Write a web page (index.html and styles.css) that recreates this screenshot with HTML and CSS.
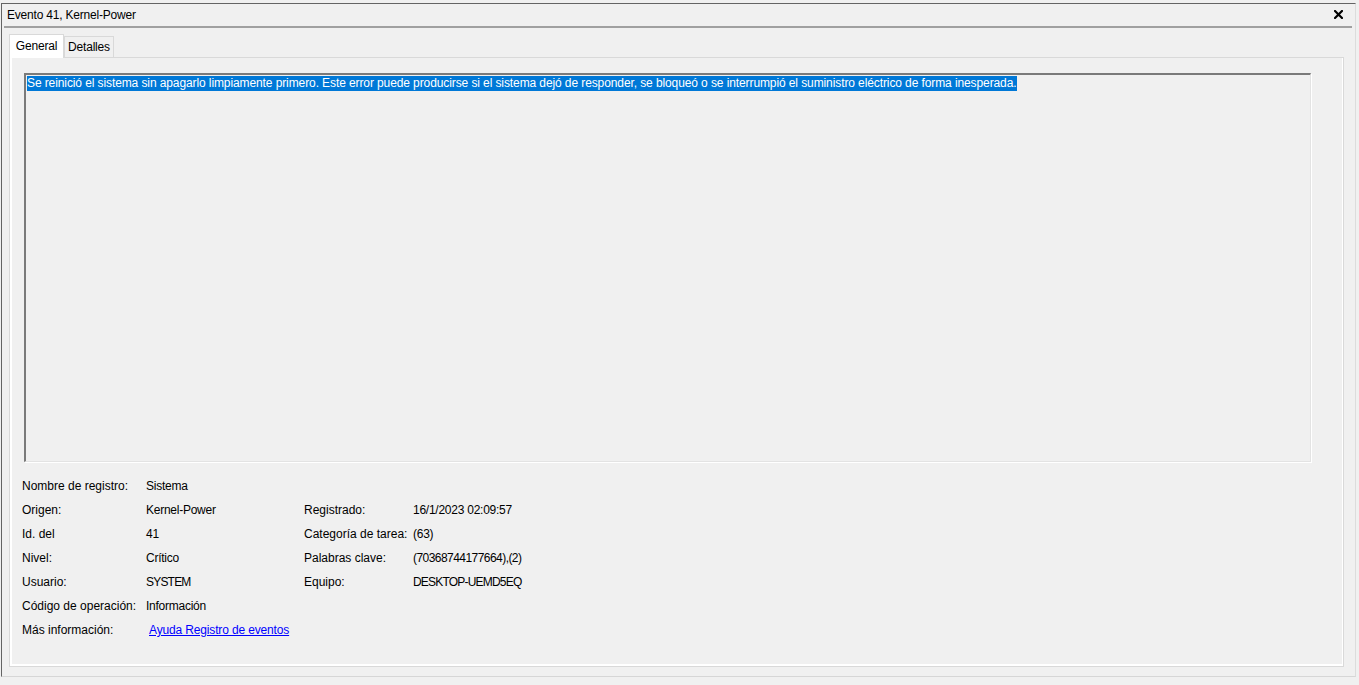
FILE: index.html
```html
<!DOCTYPE html>
<html lang="es">
<head>
<meta charset="UTF-8">
<title>Evento 41, Kernel-Power</title>
<link rel="stylesheet" href="styles.css">
</head>
<body>
  <div class="window">
    <div class="titlebar">
      <span class="title">Evento 41, Kernel-Power</span>
      <span class="close">
        <svg width="9" height="9" viewBox="0 0 9 9"><path d="M1 1 L8 8 M8 1 L1 8" stroke="#000" stroke-width="2.2" stroke-linecap="square"/></svg>
      </span>
    </div>
    <div class="sep"></div>

    <div class="tabs">
      <div class="tab active">General</div>
      <div class="tab">Detalles</div>
    </div>

    <div class="page">
      <div class="desc">
        <span class="sel">Se reinició el sistema sin apagarlo limpiamente primero. Este error puede producirse si el sistema dejó de responder, se bloqueó o se interrumpió el suministro eléctrico de forma inesperada.</span>
      </div>

      <div class="fields">
        <div class="lbl">Nombre de registro:</div><div class="val">Sistema</div><div></div><div></div>
        <div class="lbl">Origen:</div><div class="val">Kernel-Power</div><div class="lbl">Registrado:</div><div class="val">16/1/2023 02:09:57</div>
        <div class="lbl">Id. del</div><div class="val">41</div><div class="lbl">Categoría de tarea:</div><div class="val">(63)</div>
        <div class="lbl">Nivel:</div><div class="val">Crítico</div><div class="lbl">Palabras clave:</div><div class="val num">(70368744177664),(2)</div>
        <div class="lbl">Usuario:</div><div class="val caps">SYSTEM</div><div class="lbl">Equipo:</div><div class="val caps">DESKTOP-UEMD5EQ</div>
        <div class="lbl">Código de operación:</div><div class="val">Información</div><div></div><div></div>
        <div class="lbl">Más información:</div><div class="val"><a class="link" href="#">Ayuda Registro de eventos</a></div><div></div><div></div>
      </div>
    </div>
  </div>
</body>
</html>
```

FILE: styles.css
```css
* {
  margin: 0;
  padding: 0;
  box-sizing: border-box;
}

body {
  background-color: #f0f0f0;
  font-family: "Liberation Sans", Arial, sans-serif;
  font-size: 12px;
  color: #000;
}

.window {
  margin-top: 3px;
  margin-left: 1px;
  width: 1355px;
  height: 674px;
  border-top: 1px solid #646464;
  border-left: 1px solid #646464;
  border-right: 1px solid #dcdcdc;
  border-bottom: 1px solid #d6d6d6;
  box-shadow: 0 3px 0 #e4e4e4;
}

.titlebar {
  display: flex;
  align-items: center;
  justify-content: space-between;
  height: 22px;
  padding: 0 12px 0 5px;
}

.title {
  line-height: 22px;
  letter-spacing: -0.2px;
}

.close {
  display: flex;
  margin-top: -1px;
}

.sep {
  height: 2px;
  margin: 0 3px 0 2px;
  background-color: #a0a0a0;
}

.tabs {
  display: flex;
  align-items: flex-end;
  height: 29px;
  padding-left: 7px;
  position: relative;
  z-index: 1;
}

.tab {
  width: 50px;
  height: 21px;
  line-height: 20px;
  text-align: center;
  letter-spacing: -0.2px;
  border: 1px solid #d9d9d9;
  border-bottom: none;
  background-color: #f0f0f0;
}

.tab.active {
  width: 55px;
  height: 24px;
  line-height: 22px;
  margin-bottom: -1px;
  background-color: #fff;
  border-color: #d9d9d9;
}

.page {
  margin-left: 7px;
  width: 1335px;
  height: 610px;
  border: 1px solid #d9d9d9;
  box-shadow: inset 2px 0 #fff, inset 0 -2px #fff, inset -1px 0 #fff;
  padding: 15px 0 0 14px;
}

.desc {
  width: 1287px;
  height: 389px;
  border-top: 2px solid;
  border-left: 2px solid;
  border-right: 1px solid #e3e3e3;
  border-bottom: 1px solid #e3e3e3;
  border-top-color: #7a7a7a;
  border-left-color: #7a7a7a;
  box-shadow: 1px 1px 0 #fff;
  padding: 1px;
}

.sel {
  display: inline-block;
  height: 15px;
  line-height: 15px;
  letter-spacing: -0.1px;
  background-color: #0078d7;
  color: #fff;
}

.fields {
  display: grid;
  grid-template-columns: 124px 158px 109px auto;
  grid-auto-rows: 24px;
  align-items: center;
  margin-top: 12px;
  margin-left: -2px;
}

.val {
  letter-spacing: -0.25px;
}

.val.num {
  letter-spacing: -0.55px;
}

.val.caps {
  letter-spacing: -0.8px;
}

.link {
  margin-left: 3px;
  letter-spacing: -0.15px;
  color: #0000ff;
}
```
